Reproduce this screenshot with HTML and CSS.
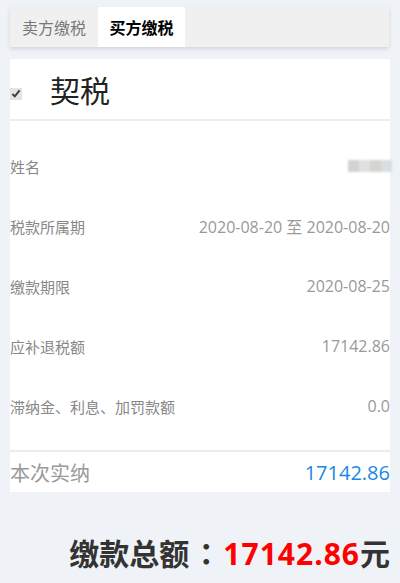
FILE: index.html
```html
<!DOCTYPE html>
<html lang="zh">
<head>
<meta charset="utf-8">
<link rel="stylesheet" href="styles.css">
</head>
<body>
<div class="page">
  <div class="tabs">
    <div class="tab">卖方缴税</div>
    <div class="tab active">买方缴税</div>
  </div>
  <div class="card">
    <div class="head">
      <input type="checkbox" class="chk" checked>
      <span class="title">契税</span>
    </div>
    <div class="rows">
      <div class="row"><span class="label">姓名</span><span class="blur"><i class="b1"></i><i class="b2"></i><i class="b3"></i><i class="b4"></i></span></div>
      <div class="row"><span class="label">税款所属期</span><span class="val">2020-08-20 至 2020-08-20</span></div>
      <div class="row"><span class="label">缴款期限</span><span class="val">2020-08-25</span></div>
      <div class="row"><span class="label">应补退税额</span><span class="val">17142.86</span></div>
      <div class="row"><span class="label">滞纳金、利息、加罚款额</span><span class="val">0.0</span></div>
    </div>
    <div class="total">
      <span class="tlabel">本次实纳</span>
      <span class="tval">17142.86</span>
    </div>
  </div>
  <div class="sum">缴款总额<span class="colon">：</span><span class="num">17142.86</span>元</div>
</div>
</body>
</html>
```
FILE: styles.css
```css
* { box-sizing: border-box; }
html, body { margin: 0; padding: 0; }
body {
  background: #eff3f7;
  font-family: "Open Sans", "Noto Sans CJK SC", sans-serif;
  width: 400px;
  height: 583px;
  overflow: hidden;
}
.page { padding: 7px 10px 0 10px; }
.tabs {
  display: flex;
  height: 40px;
  background: #f0f0f0;
  box-shadow: 0 2px 4px rgba(0,0,0,0.12);
  width: 379px;
}
.tab {
  width: 88px;
  display: flex;
  align-items: center;
  justify-content: center;
  font-size: 16px;
  color: #777;
  font-family: "Noto Sans CJK SC", sans-serif;
}
.tab.active {
  width: 87px;
  background: #fff;
  color: #000;
  font-weight: bold;
}
.card {
  margin-top: 12px;
  background: #fff;
}
.head {
  height: 62px;
  display: flex;
  align-items: center;
  border-bottom: 2px solid #ececec;
}
.chk {
  margin: 10px 0 0 0;
  width: 12px;
  height: 12px;
  accent-color: #e4e4e4;
}
.title {
  margin-left: 28px;
  font-size: 30px;
  color: #222;
  font-family: "Noto Sans CJK SC", sans-serif;
  line-height: 1;
}
.rows { padding: 15px 0 14px; }
.row {
  height: 60px;
  display: flex;
  align-items: center;
  justify-content: space-between;
}
.label { color: #888; font-size: 15px; font-family: "Noto Sans CJK SC", sans-serif; }
.val { color: #999; font-size: 16px; }
.blur {
  display: flex;
  padding: 0 0 0 10px;
  filter: blur(0.8px);
  margin-right: -2px;
}
.blur i { display: block; width: 11px; height: 12px; }
.b1 { background: #d2d2d2; }
.b2 { background: #e0e0e0; }
.b3 { background: #d6d3d0; }
.b4 { background: #d8dee2; }
.total {
  height: 42px;
  border-top: 2px solid #ececec;
  display: flex;
  align-items: center;
  justify-content: space-between;
}
.tlabel { font-size: 20px; color: #999; font-family: "Noto Sans CJK SC", sans-serif; }
.tval { font-size: 20px; color: #1a87e6; }
.sum {
  margin-top: 40px;
  text-align: right;
  font-size: 30px;
  font-weight: bold;
  color: #333;
  font-family: "Noto Sans CJK SC", sans-serif;
  line-height: 40px;
}
.sum .colon {
  display: inline-block;
  width: 34px;
  text-align: center;
  font-family: "Noto Sans CJK TC", sans-serif;
}
.sum .num { color: #ff0000; font-family: "Open Sans", sans-serif; letter-spacing: 1px; }
```
